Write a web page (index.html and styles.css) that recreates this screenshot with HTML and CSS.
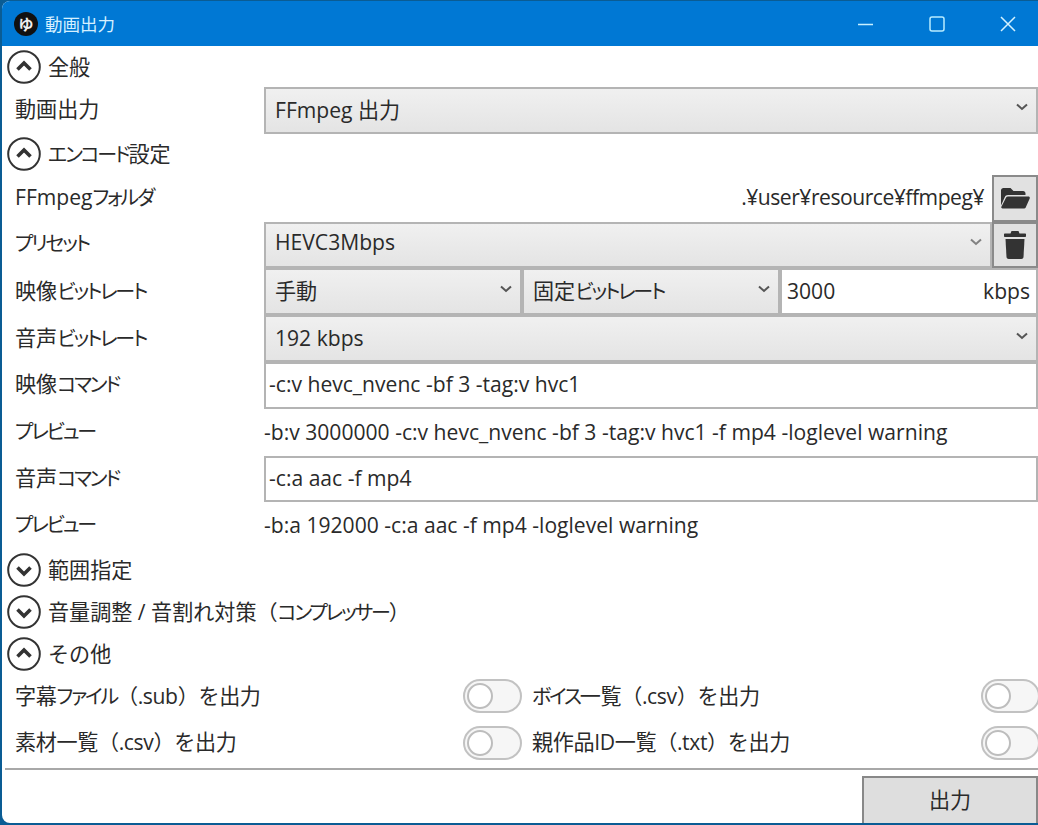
FILE: index.html
```html
<!DOCTYPE html>
<html lang="ja">
<head>
    <meta charset="UTF-8">
    <meta name="viewport" content="width=device-width, initial-scale=1.0">
    <title>動画出力</title>
    <link rel="stylesheet" href="styles.css">
</head>
<body>

    <svg class="defs" width="0" height="0">
        <symbol id="up" viewBox="0 0 34 34">
            <circle cx="17" cy="17" r="15.800" fill="none" stroke="#333" stroke-width="2"/>
            <path d="M10.500 19.500 17 13l6.500 6.500" fill="none" stroke="#333" stroke-width="3.600"/>
        </symbol>
        <symbol id="down" viewBox="0 0 34 34">
            <circle cx="17" cy="17" r="15.800" fill="none" stroke="#333" stroke-width="2"/>
            <path d="M10.500 14.500 17 21l6.500-6.500" fill="none" stroke="#333" stroke-width="3.600"/>
        </symbol>
        <symbol id="chev" viewBox="0 0 12 8">
            <path d="M1 1.500 6 6l5-4.500" fill="none" stroke="#555" stroke-width="2"/>
        </symbol>
    </svg>

    <div class="window">
        <div class="titlebar">
            <span class="app-icon">ゆ</span>
            <span class="title">動画出力</span>
            <div class="controls">
                <svg width="16" height="16" viewBox="0 0 16 16"><path d="M0 8.500h15" stroke="#c8f0ff" stroke-width="1.500"/></svg>
                <svg width="16" height="16" viewBox="0 0 16 16"><rect x="1" y="1" width="14" height="14" rx="2" fill="none" stroke="#b8ecff" stroke-width="1.500"/></svg>
                <svg width="16" height="16" viewBox="0 0 16 16"><path d="M1 1l14 14M15 1 1 15" stroke="#d4f2ff" stroke-width="1.500"/></svg>
            </div>
        </div>

        <div class="content">
            <div class="head"><svg class="toggle-icon"><use href="#up"/></svg><span class="head-text">全般</span></div>
            <div class="row">
                <div class="label">動画出力</div>
                <div class="select"><span>FFmpeg 出力</span><svg class="chev"><use href="#chev"/></svg></div>
            </div>

            <div class="head"><svg class="toggle-icon"><use href="#up"/></svg><span class="head-text"><span class="k">エンコード</span>設定</span></div>
            <div class="row">
                <div class="label">FFmpeg<span class="k">フォルダ</span></div>
                <div class="with-btn">
                    <div class="path">.¥user¥resource¥ffmpeg¥</div>
                    <div class="icon-btn">
                        <svg width="30" height="24" viewBox="0 0 30 24"><path d="M1 4.500C1 3 2 2 3.500 2h7l3 3H23c1.500 0 2.500 1 2.500 2.500V9H8c-1.500 0-2.700.8-3.300 2.200L1 19.500z" fill="#333"/><path d="M8 10.500h20.500c1 0 1.600 1 1.200 1.900l-4 9c-.4.800-1 1.100-1.900 1.100H2.500c-1 0-1.500-.9-1.100-1.700l4.700-9.200c.4-.7 1-1.100 1.900-1.100z" fill="#333"/></svg>
                    </div>
                </div>
            </div>
            <div class="row">
                <div class="label"><span class="k">プリセット</span></div>
                <div class="with-btn">
                    <div class="select preset"><span>HEVC3Mbps</span><svg class="chev"><use href="#chev"/></svg></div>
                    <div class="icon-btn">
                        <svg width="22" height="28" viewBox="0 0 22 28"><path d="M7.500 0h7l1 2.500H21c.6 0 1 .4 1 1V5c0 .6-.4 1-1 1H1C.4 6 0 5.600 0 5V3.500c0-.6.4-1 1-1h5.500z" fill="#333"/><path d="M1.500 8h19l-1 18c-.1 1.200-1 2-2.200 2H4.700c-1.200 0-2.100-.8-2.200-2z" fill="#333"/></svg>
                    </div>
                </div>
            </div>
            <div class="row">
                <div class="label">映像<span class="k">ビットレート</span></div>
                <div class="three">
                    <div class="select"><span>手動</span><svg class="chev"><use href="#chev"/></svg></div>
                    <div class="select"><span>固定<span class="k">ビットレート</span></span><svg class="chev"><use href="#chev"/></svg></div>
                    <div class="input unit"><span>3000</span><span>kbps</span></div>
                </div>
            </div>
            <div class="row">
                <div class="label">音声<span class="k">ビットレート</span></div>
                <div class="select"><span>192 kbps</span><svg class="chev"><use href="#chev"/></svg></div>
            </div>
            <div class="row">
                <div class="label">映像<span class="k">コマンド</span></div>
                <div class="input"><span>-c:v hevc_nvenc -bf 3 -tag:v hvc1</span></div>
            </div>
            <div class="row">
                <div class="label"><span class="k">プレビュー</span></div>
                <div class="preview">-b:v 3000000 -c:v hevc_nvenc -bf 3 -tag:v hvc1 -f mp4 -loglevel warning</div>
            </div>
            <div class="row">
                <div class="label">音声<span class="k">コマンド</span></div>
                <div class="input"><span>-c:a aac -f mp4</span></div>
            </div>
            <div class="row">
                <div class="label"><span class="k">プレビュー</span></div>
                <div class="preview">-b:a 192000 -c:a aac -f mp4 -loglevel warning</div>
            </div>

            <div class="head tall"><svg class="toggle-icon"><use href="#down"/></svg><span class="head-text">範囲指定</span></div>
            <div class="head tall"><svg class="toggle-icon"><use href="#down"/></svg><span class="head-text">音量調整 / 音割れ対策（<span class="k">コンプレッサー</span>）</span></div>
            <div class="head tall"><svg class="toggle-icon"><use href="#up"/></svg><span class="head-text">その他</span></div>

            <div class="switches">
                <div class="switch-row">
                    <div class="label">字幕<span class="k">ファイル</span>（.sub）を出力</div>
                    <div class="switch"><i></i></div>
                    <div class="label second"><span class="k">ボイス</span>一覧（.csv）を出力</div>
                    <div class="switch"><i></i></div>
                </div>
                <div class="switch-row">
                    <div class="label">素材一覧（.csv）を出力</div>
                    <div class="switch"><i></i></div>
                    <div class="label second">親作品ID一覧（.txt）を出力</div>
                    <div class="switch"><i></i></div>
                </div>
            </div>
        </div>

        <div class="footer">
            <div class="output-btn"><span>出力</span></div>
        </div>
    </div>

</body>
</html>
```

FILE: styles.css
```css
html, body {
    margin: 0;
    padding: 0;
    height: 100%;
}

body {
    background-color: #0a5c94;
    overflow: hidden;
    font-family: "Open Sans", "Noto Sans CJK JP", sans-serif;
    font-size: 21.100px;
    color: #2a2a2a;
}

.defs {
    display: none;
}

/* katakana is set much narrower in the original font */
.k {
    font-feature-settings: "palt";
    font-size: 20px;
    letter-spacing: -2.200px;
}

.window {
    box-sizing: border-box;
    height: 822px;
    margin: 1px 0 0 2px;
    background-color: #fff;
    border-radius: 8px 0 0 8px;
    overflow: hidden;
    display: flex;
    flex-direction: column;
}

.titlebar {
    flex: none;
    height: 45px;
    margin-left: -2px;
    background-color: #0078d4;
    display: flex;
    align-items: center;
    padding-left: 14px;
    color: #d6f0ff;
}

.app-icon {
    width: 24px;
    height: 24px;
    border-radius: 50%;
    background-color: #111;
    color: #eee;
    font-size: 15px;
    font-weight: bold;
    line-height: 24px;
    text-align: center;
}

.title {
    margin-left: 7px;
    font-size: 17.500px;
}

.controls {
    margin-left: auto;
    display: flex;
    gap: 55px;
    padding-right: 22px;
}

.content {
    flex: 1;
}

.head {
    height: 41px;
    display: flex;
    align-items: center;
    gap: 7px;
    padding-left: 5px;
    white-space: nowrap;
}

.head.tall {
    height: 42px;
}

.head-text {
    padding-bottom: 2px;
}

.toggle-icon {
    width: 34px;
    height: 34px;
    flex: none;
}

.row {
    height: 46.800px;
    display: grid;
    grid-template-columns: 262px 1fr;
    align-items: stretch;
}

.label {
    padding-left: 13px;
    padding-bottom: 4px;
    align-self: center;
    white-space: nowrap;
}

.select, .input {
    box-sizing: border-box;
    min-width: 0;
    display: flex;
    align-items: center;
    border: 2px solid #b4b4b4;
    padding-left: 9px;
    white-space: nowrap;
}

.select span, .input span {
    padding-bottom: 3px;
}

.select .k {
    padding-bottom: 0;
}

.select {
    justify-content: space-between;
    background: linear-gradient(#f0f0f0, #e4e4e4);
    padding-right: 8px;
}

.select.preset span {
    padding-bottom: 6px;
}

.select.preset .chev {
    opacity: 0.7;
}

.chev {
    width: 12px;
    height: 8px;
    margin-top: -6px;
    flex: none;
}

.input {
    background-color: #fff;
    padding-left: 3px;
}

.unit {
    justify-content: space-between;
    padding-left: 5px;
    padding-right: 6px;
}

.preview {
    align-self: center;
    padding-bottom: 2px;
}

.with-btn {
    display: grid;
    grid-template-columns: 1fr 46px;
}

.three {
    display: grid;
    grid-template-columns: repeat(3, 1fr);
}

.path {
    align-self: center;
    text-align: right;
    padding-right: 8px;
    padding-bottom: 3px;
    letter-spacing: -0.480px;
}

.icon-btn {
    box-sizing: border-box;
    border: 2px solid #8a8a8a;
    background-color: #e1e1e1;
    display: flex;
    align-items: center;
    justify-content: center;
}

.switches {
    margin-top: -2.500px;
}

.switch-row {
    height: 46.800px;
    display: grid;
    grid-template-columns: 461px 59px 459px 59px;
    align-items: center;
}

.switch-row .label {
    letter-spacing: -0.360px;
    padding-bottom: 3px;
}

.switch-row .second {
    padding-left: 10px;
}

.switch {
    box-sizing: border-box;
    width: 59px;
    height: 34px;
    border: 2px solid #c2c2c2;
    border-radius: 17px;
    background-color: #f6f6f6;
    padding: 2px;
}

.switch i {
    display: block;
    box-sizing: border-box;
    width: 26px;
    height: 26px;
    border-radius: 50%;
    border: 2px solid #bdbdbd;
    background-color: #fff;
}

.footer {
    flex: none;
    height: 53px;
    margin-left: 3px;
    border-top: 2px solid #a8a8a8;
    display: flex;
    justify-content: flex-end;
    align-items: flex-end;
}

.output-btn {
    box-sizing: border-box;
    width: 176px;
    height: 47px;
    border: 2px solid #888;
    border-bottom: none;
    background-color: #dedede;
    display: flex;
    align-items: center;
    justify-content: center;
    padding-bottom: 3px;
}
```
